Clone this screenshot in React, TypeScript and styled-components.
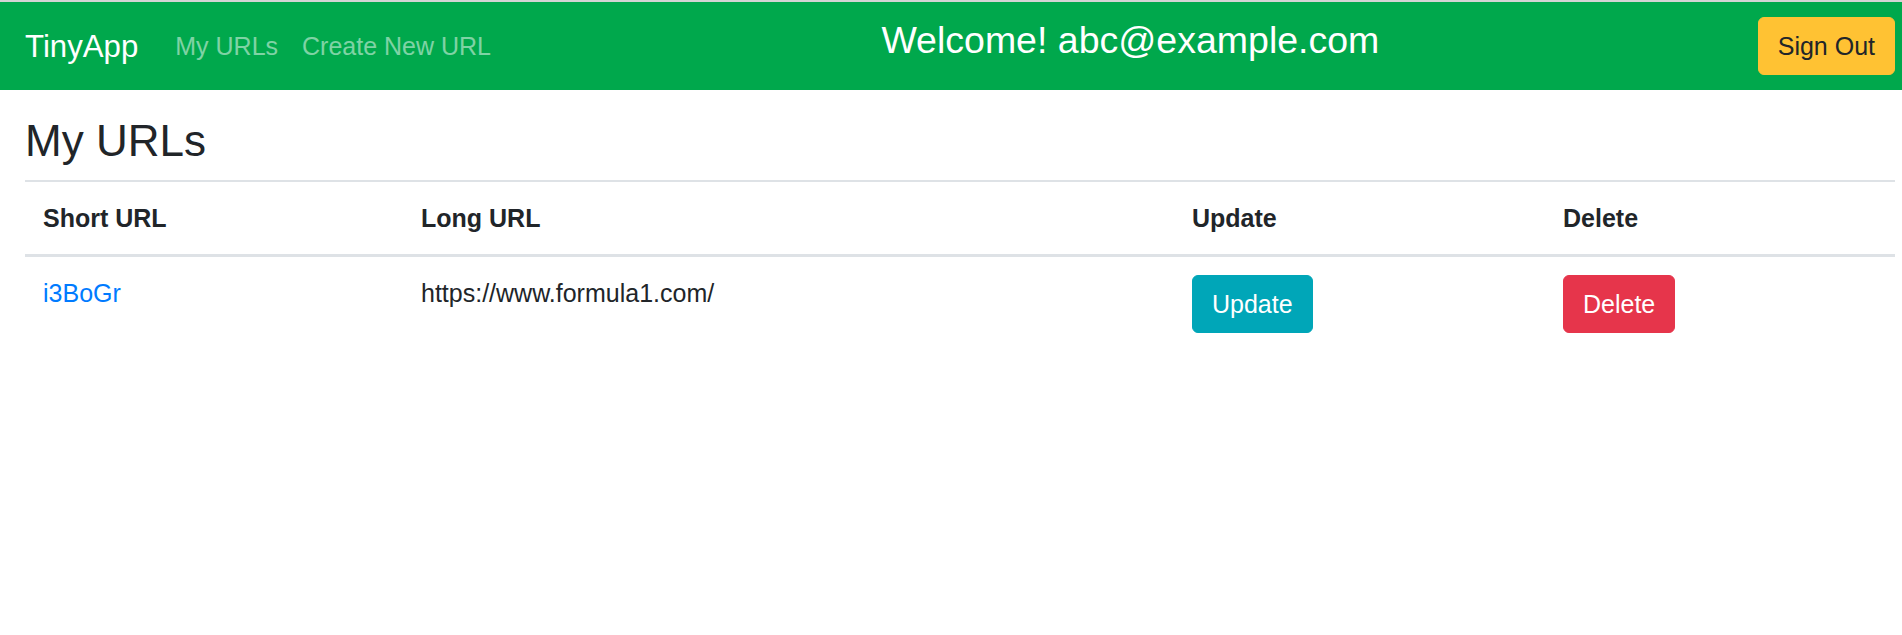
import React from "react";
import styled, { createGlobalStyle } from "styled-components";

const GlobalStyle = createGlobalStyle`
  html, body {
    margin: 0;
    padding: 0;
    background: #ffffff;
  }
  body {
    font-family: "Liberation Sans", Arial, Helvetica, sans-serif;
    font-size: 25px;
    line-height: 36px;
    color: #212529;
  }
  * { box-sizing: border-box; }
`;

const Page = styled.div`
  border-top: 2px solid #d4d4d4;
`;

const Navbar = styled.nav`
  display: flex;
  align-items: center;
  height: 88px;
  padding: 0 7px 0 25px;
  background: #00a84c;
`;

const Brand = styled.a`
  font-size: 31.2px;
  line-height: 45px;
  color: #ffffff;
  text-decoration: none;
  margin-right: 25px;
  white-space: nowrap;
`;

const NavList = styled.div`
  display: flex;
  align-items: center;
`;

const NavLink = styled.a`
  padding: 0 12px;
  font-size: 25px;
  line-height: 36px;
  color: rgba(255, 255, 255, 0.5);
  text-decoration: none;
  white-space: nowrap;
`;

const Welcome = styled.h4`
  margin: 0 auto 12px;
  font-size: 37.5px;
  font-weight: 500;
  line-height: 43px;
  color: #ffffff;
  white-space: nowrap;
`;

const Button = styled.button<{ $bg: string; $fg: string }>`
  display: inline-block;
  font-family: inherit;
  font-size: 25px;
  line-height: 36px;
  padding: 10px 19px;
  border: 1px solid ${(p) => p.$bg};
  border-radius: 6px;
  background: ${(p) => p.$bg};
  color: ${(p) => p.$fg};
  cursor: pointer;
  white-space: nowrap;
`;

const Main = styled.main`
  padding: 0 7px 0 25px;
`;

const Title = styled.h3`
  margin: 25px 0 12px;
  font-size: 44px;
  font-weight: 500;
  line-height: 52.8px;
`;

const Table = styled.table`
  width: 100%;
  border-collapse: collapse;
  table-layout: fixed;
`;

const Col = styled.col<{ $w?: number }>`
  width: ${(p) => (p.$w ? `${p.$w}px` : "auto")};
`;

const Th = styled.th`
  padding: 18px;
  text-align: left;
  vertical-align: bottom;
  font-weight: bold;
  border-top: 2px solid #dee2e6;
  border-bottom: 3px solid #dee2e6;
`;

const Td = styled.td`
  padding: 18px;
  vertical-align: top;
  border-top: 2px solid #dee2e6;
`;

const ShortLink = styled.a`
  color: #007bff;
  text-decoration: none;
`;

export default function App() {
  return (
    <>
      <GlobalStyle />
      <Page>
        <Navbar>
          <Brand href="#">TinyApp</Brand>
          <NavList>
            <NavLink href="#">My URLs</NavLink>
            <NavLink href="#">Create New URL</NavLink>
          </NavList>
          <Welcome>Welcome! abc@example.com</Welcome>
          <Button $bg="#ffc233" $fg="#212529">Sign Out</Button>
        </Navbar>
        <Main>
          <Title>My URLs</Title>
          <Table>
            <colgroup>
              <Col $w={378} />
              <Col $w={771} />
              <Col $w={371} />
              <Col />
            </colgroup>
            <thead>
              <tr>
                <Th>Short URL</Th>
                <Th>Long URL</Th>
                <Th>Update</Th>
                <Th>Delete</Th>
              </tr>
            </thead>
            <tbody>
              <tr>
                <Td>
                  <ShortLink href="#">i3BoGr</ShortLink>
                </Td>
                <Td>https://www.formula1.com/</Td>
                <Td>
                  <Button $bg="#00a6b8" $fg="#ffffff">Update</Button>
                </Td>
                <Td>
                  <Button $bg="#e6354b" $fg="#ffffff">Delete</Button>
                </Td>
              </tr>
            </tbody>
          </Table>
        </Main>
      </Page>
    </>
  );
}
